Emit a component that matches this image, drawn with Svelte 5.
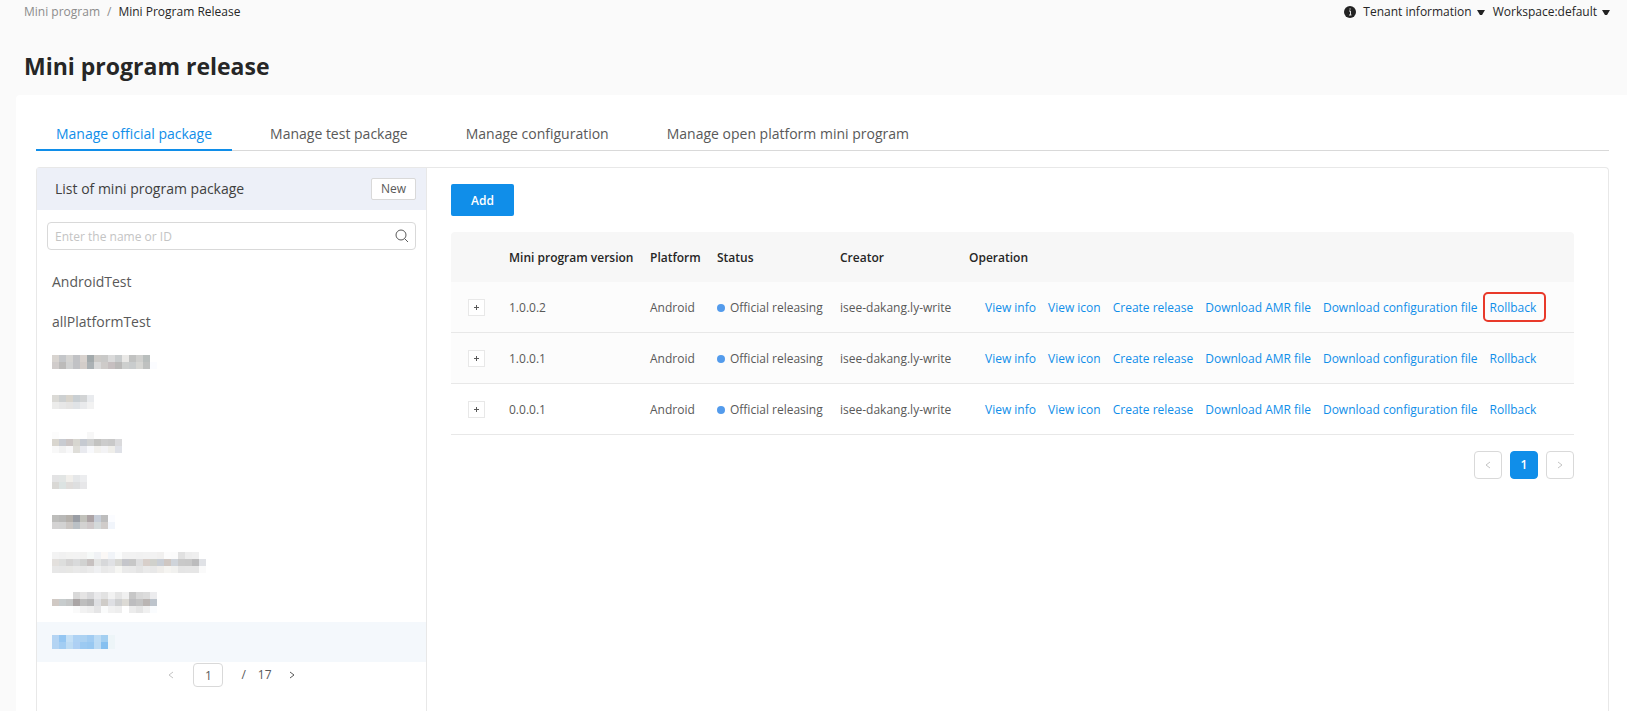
<script lang="ts">
	interface Release {
		version: string;
		platform: string;
		status: string;
		creator: string;
		flagged?: boolean;
	}

	const tabs = [
		'Manage official package',
		'Manage test package',
		'Manage configuration',
		'Manage open platform mini program'
	];

	const operations = [
		'View info',
		'View icon',
		'Create release',
		'Download AMR file',
		'Download configuration file',
		'Rollback'
	];

	const releases: Release[] = [
		{ version: '1.0.0.2', platform: 'Android', status: 'Official releasing', creator: 'isee-dakang.ly-write', flagged: true },
		{ version: '1.0.0.1', platform: 'Android', status: 'Official releasing', creator: 'isee-dakang.ly-write' },
		{ version: '0.0.0.1', platform: 'Android', status: 'Official releasing', creator: 'isee-dakang.ly-write' }
	];

	const packages = ['AndroidTest', 'allPlatformTest'];

	// masked package names, one string of cell colours per line of the mosaic
	const CELL = 7;
	const masked = [
		[
			'd8d4d0 c4c6c9 d5d4d2 c1c2c5 d8d2ce a2a9ab cccac7 c9c9c8 dadada c9cccd e9e8e6 c1c2c1 cfcfcd b9bebd',
			'd0cccb bcbbba d1d2d2 c1c2c5 d3cdc9 abb1b4 d9d9d9 cecbc9 c6bfc0 bab9b8 cdcfce c9cccd d6d6d3 bfc1c0 fbfcff'
		],
		['dbdad6 cdd0d1 d8d4cc c9cfd3 d2d4d5 e9ebee', 'ececeb e7e7e7 e5e4e3 e0e3e6 e9eaec f2f2f2'],
		[
			'fcfcfc ffffff ffffff ffffff ffffff f7f7f7',
			'd9d6cf c8cbd1 cbc5c4 d7d6d0 c6cad1 d0d1d1 c3c3c1 cccccc c9c9c9 dadadc',
			'f8f8f8 f1f1f1 f8f8f9 dfded9 e9eaef f8f9fc f2f1ee f3f3f5 efeeea dfe1e7'
		],
		['e3e3e4 e2e5e4 f1efeb e5e7e9 ecedef', 'd9d8d5 dce3e2 e0dddb dedfe0 e7e7e9'],
		[
			'bdbdbb b8b8b7 b4b0ab 999da4 c1c1bb aca3a5 c7cdd7 bdbdbd fbfcff',
			'd4d3d3 d2d2d2 cac6c3 bac0c5 d3d2d1 cfc9ca d4d9da d0ccca f1f5fb'
		],
		[
			'f3f3f3 f1f1f1 f3f3f2 f3f3f3 f2f2f1 f6f9f8 f0f2f5 fbf8f6 f1f4f8 fbfcfc f2f2f2 f2f2f2 f1f1f1 f2f2f2 f2f2f2 f1f0ef fcfcfc fbfbfb e1e1e1 ededed efefef',
			'e3e0dd dddedd d4d3d3 d9dadb d1d2d1 c7c1c0 e3e4e3 d7d8da e0e1e4 d8d8d4 c5c6cb c7c7c7 dededf d8cfca d0d1cc c9ced5 cfc7c2 cfd4da c9c9c9 c8c8c8 bcbcbd e0e2e6',
			'e7e7e7 e6e6e6 e7e7e5 e9e9e9 e7e7e7 ebebeb eff0f2 e9e9e9 ececec f6f6f3 eaeaea e9e9e9 e4e4e4 eaeaea e8e8e8 efedea f5f4f1 f1f1ef e5e5e5 e6e6e6 e6e6e6 fafafa'
		],
		[
			'ffffff ffffff ffffff d9d9d9 e5e4e4 d9d9db e9e9eb e2e2e2 f2f2f2 e5e5e5 f0f0f0 c7c7c7 d8d8d8 dcdcdc ececee',
			'd0c9c4 c7cccd c4c6c6 aaa5a5 bebebe b6b6b7 dedfe2 cfccc8 dedfe3 cfd0d1 dcdad5 bdbdbf c3c3c3 bab5b3 bdc4cc',
			'ffffff ffffff ffffff fafafa f2f2f2 eeeeee e5e5e6 fafbfb f1f1f1 eeeeee ffffff ececec e5e5e5 f0f0f0 fafcfe'
		],
		[
			'b4d4f3 94c6f2 c5e0f6 aed2f4 acd2f2 a1ccf2 bddcf5 a3cff1 edf5f8',
			'b3d4f3 a2cdf3 bedcf4 aed0f4 9ccaf2 98c8f1 bcdbf4 86c0f0 edf5f8'
		]
	].map((rows) => rows.map((row) => row.split(' ')));

	let activeTab = $state(0);
	let selectedMask = $state(masked.length - 1);
	let query = $state('');
	let listPage = $state('1');
</script>

{#snippet chevron(direction: 'left' | 'right')}
	<svg class="chevron" viewBox="0 0 8 8" width="8" height="8" aria-hidden="true">
		<path d={direction === 'left' ? 'M6 1 L2 4 L6 7' : 'M2 1 L6 4 L2 7'} />
	</svg>
{/snippet}

{#snippet caret()}
	<svg class="caret" viewBox="0 0 8 5" width="8" height="5" aria-hidden="true">
		<path d="M0 0 H8 L5 5 H3 Z" />
	</svg>
{/snippet}

<div class="page">
	<header class="topbar">
		<nav class="breadcrumb" aria-label="Breadcrumb">
			<a href="#mini-program">Mini program</a>
			<span class="separator">/</span>
			<span class="current">Mini Program Release</span>
		</nav>
		<div class="context">
			<button type="button" class="context-button">
				<svg class="info" viewBox="0 0 12 12" width="12" height="12" aria-hidden="true">
					<circle cx="6" cy="6" r="6" fill="#222" />
					<path d="M5 5 H6.5 V9 M5 9 H7.5 M5.4 3 H6.8" stroke="#ddd" fill="none" />
				</svg>
				Tenant information
				{@render caret()}
			</button>
			<button type="button" class="context-button">
				Workspace:default
				{@render caret()}
			</button>
		</div>
	</header>

	<h1>Mini program release</h1>

	<main class="panel">
		<div class="tabs" role="tablist">
			{#each tabs as tab, index}
				<button
					type="button"
					class="tab"
					class:active={index === activeTab}
					role="tab"
					aria-selected={index === activeTab}
					onclick={() => (activeTab = index)}
				>
					{tab}
				</button>
			{/each}
		</div>

		<div class="content">
			<aside class="sidebar">
				<div class="sidebar-header">
					<h2>List of mini program package</h2>
					<button type="button" class="new-button">New</button>
				</div>

				<div class="search">
					<input type="text" bind:value={query} placeholder="Enter the name or ID" aria-label="Enter the name or ID" />
					<button type="button" class="search-button" aria-label="Search">
						<svg viewBox="0 0 14 14" width="14" height="14" aria-hidden="true">
							<circle cx="6" cy="6" r="5" />
							<path d="M9.6 9.6 L13 13" />
						</svg>
					</button>
				</div>

				<ul class="packages">
					{#each packages as name}
						<li><button type="button" class="package">{name}</button></li>
					{/each}
					{#each masked as rows, index}
						<li>
							<button
								type="button"
								class="package"
								class:selected={index === selectedMask}
								aria-label="Hidden package {index + 1}"
								onclick={() => (selectedMask = index)}
							>
								<svg
									width={Math.max(...rows.map((row) => row.length)) * CELL}
									height={rows.length * CELL}
									shape-rendering="crispEdges"
									aria-hidden="true"
								>
									{#each rows as row, y}
										{#each row as color, x}
											<rect x={x * CELL} y={y * CELL} width={CELL} height={CELL} fill="#{color}" />
										{/each}
									{/each}
								</svg>
							</button>
						</li>
					{/each}
				</ul>

				<div class="simple-pager">
					<button type="button" class="arrow" disabled aria-label="Previous page">{@render chevron('left')}</button>
					<input type="text" bind:value={listPage} aria-label="Page" />
					<span class="slash">/</span>
					<span>17</span>
					<button type="button" class="arrow" aria-label="Next page">{@render chevron('right')}</button>
				</div>
			</aside>

			<section class="releases">
				<button type="button" class="add-button">Add</button>

				<table>
					<colgroup>
						<col class="col-expand" />
						<col class="col-version" />
						<col class="col-platform" />
						<col class="col-status" />
						<col class="col-creator" />
						<col />
					</colgroup>
					<thead>
						<tr>
							<th aria-label="Expand"></th>
							<th>Mini program version</th>
							<th>Platform</th>
							<th>Status</th>
							<th>Creator</th>
							<th>Operation</th>
						</tr>
					</thead>
					<tbody>
						{#each releases as release}
							<tr>
								<td class="expand-cell">
									<button type="button" class="expand" aria-label="Expand {release.version}">
										<svg viewBox="0 0 7 7" width="7" height="7" aria-hidden="true">
											<path d="M1 3.5 H6 M3.5 1 V6" />
										</svg>
									</button>
								</td>
								<td>{release.version}</td>
								<td>{release.platform}</td>
								<td><span class="status">{release.status}</span></td>
								<td>{release.creator}</td>
								<td>
									<div class="operations">
										{#each operations as operation}
											<a
												href="#{operation.toLowerCase().replaceAll(' ', '-')}"
												class:flagged={release.flagged && operation === 'Rollback'}
											>{operation}</a>
										{/each}
									</div>
								</td>
							</tr>
						{/each}
					</tbody>
				</table>

				<nav class="pagination" aria-label="Pagination">
					<button type="button" disabled aria-label="Previous">{@render chevron('left')}</button>
					<button type="button" class="current-page" aria-current="page">1</button>
					<button type="button" disabled aria-label="Next">{@render chevron('right')}</button>
				</nav>
			</section>
		</div>
	</main>
</div>

<style>
	:global(body) {
		background: #fafafa;
	}

	.page {
		--primary: #108ee9;
		--border: #d9d9d9;
		--border-light: #e8e8e8;
		--text: #595959;
		display: flex;
		flex-direction: column;
		box-sizing: border-box;
		height: 100vh;
		overflow: hidden;
		font-family: 'Segoe UI', 'Open Sans', 'Noto Sans', sans-serif;
		font-size: 12px;
		line-height: 18px;
		color: var(--text);
	}

	.page *,
	.page *::after {
		box-sizing: border-box;
	}

	button,
	input {
		margin: 0;
		padding: 0;
		font: inherit;
		color: inherit;
	}

	button {
		border: none;
		background: none;
		cursor: pointer;
	}

	button:disabled {
		cursor: not-allowed;
	}

	.topbar {
		display: flex;
		justify-content: space-between;
		padding: 3px 17px 0 24px;
	}

	.breadcrumb {
		display: flex;
		gap: 7px;
	}

	.breadcrumb a,
	.separator {
		color: #8c8c8c;
		text-decoration: none;
	}

	.current,
	.context-button {
		color: #262626;
	}

	.context {
		display: flex;
		gap: 8px;
	}

	.context-button {
		display: flex;
		align-items: center;
		gap: 5px;
	}

	.info {
		margin-right: 2px;
	}

	.caret {
		fill: #222;
	}

	h1 {
		margin: 28px 24px 12px;
		font-size: 23px;
		line-height: 34px;
		font-weight: 700;
		color: #262626;
	}

	.panel {
		flex: 1;
		display: flex;
		flex-direction: column;
		min-height: 0;
		margin-left: 16px;
		padding: 20px 18px 0 20px;
		background: #fff;
		border-top-left-radius: 4px;
	}

	.tabs {
		display: flex;
		gap: 18px;
		margin-bottom: 16px;
		box-shadow: inset 0 -1px 0 var(--border);
	}

	.tab {
		padding: 9px 20px 5px;
		border-bottom: 2px solid transparent;
		font-size: 14px;
		line-height: 20px;
	}

	.tab.active {
		border-bottom-color: var(--primary);
		color: var(--primary);
	}

	.content {
		flex: 1;
		display: flex;
		min-height: 0;
		border: 1px solid var(--border-light);
		border-bottom: none;
		border-radius: 4px 4px 0 0;
	}

	.sidebar {
		flex: none;
		width: 390px;
		border-right: 1px solid var(--border-light);
	}

	.sidebar-header {
		display: flex;
		align-items: center;
		justify-content: space-between;
		padding: 10px 10px 10px 18px;
		background: #edf0f8;
	}

	h2 {
		margin: 0;
		font-size: 14px;
		line-height: 20px;
		font-weight: 400;
		color: #404040;
	}

	.new-button {
		padding: 0 9px;
		border: 1px solid var(--border);
		border-radius: 2px;
		background: #fff;
		line-height: 20px;
	}

	.search {
		display: flex;
		align-items: center;
		margin: 12px 10px;
		padding: 0 6px 0 7px;
		border: 1px solid var(--border);
		border-radius: 4px;
	}

	.search input {
		flex: 1;
		height: 26px;
		border: none;
		outline: none;
		background: none;
	}

	.search input::placeholder {
		color: #c4c4c4;
	}

	.search-button {
		display: flex;
	}

	.search-button svg {
		fill: none;
		stroke: #595959;
	}

	.packages {
		margin: 0;
		padding: 0;
		list-style: none;
	}

	.package {
		display: flex;
		align-items: center;
		width: 100%;
		height: 40px;
		padding: 0 15px;
		font-size: 14px;
	}

	.package.selected {
		background: #f4f8fc;
	}

	.simple-pager {
		display: flex;
		align-items: center;
		justify-content: center;
		gap: 16px;
		margin-top: 1px;
	}

	.simple-pager input {
		width: 30px;
		height: 24px;
		margin: 0 2px;
		border: 1px solid var(--border);
		border-radius: 4px;
		text-align: center;
	}

	.slash {
		margin-right: -4px;
	}

	.arrow {
		display: flex;
	}

	.chevron {
		fill: none;
		stroke: #595959;
	}

	button:disabled .chevron {
		stroke: #c4c4c4;
	}

	.releases {
		flex: 1;
		min-width: 0;
		padding: 16px 34px 0 24px;
	}

	.add-button {
		display: block;
		padding: 8px 20px 6px;
		border-radius: 2px;
		background: var(--primary);
		font-weight: 600;
		color: #fff;
	}

	table {
		width: 100%;
		margin: 16px 0;
		border-spacing: 0;
		table-layout: fixed;
		white-space: nowrap;
	}

	.col-expand {
		width: 50px;
	}

	.col-version {
		width: 141px;
	}

	.col-platform {
		width: 67px;
	}

	.col-status {
		width: 123px;
	}

	.col-creator {
		width: 129px;
	}

	th,
	td {
		height: 50px;
		padding: 2px 8px 0;
		text-align: left;
	}

	th {
		background: #f7f7f7;
		font-weight: 600;
		color: #262626;
	}

	th:first-child {
		border-top-left-radius: 4px;
	}

	th:last-child {
		border-top-right-radius: 4px;
	}

	td {
		height: 51px;
		border-bottom: 1px solid var(--border-light);
		background: #fcfcfc;
	}

	tr:last-child td {
		background: #fff;
	}

	.expand-cell {
		padding: 0 0 0 17px;
	}

	.expand {
		display: flex;
		align-items: center;
		justify-content: center;
		width: 17px;
		height: 17px;
		border: 1px solid var(--border-light);
		background: #fff;
	}

	.expand svg {
		fill: none;
		stroke: #595959;
	}

	.status {
		display: flex;
		align-items: center;
		gap: 5px;
	}

	.status::before {
		content: '';
		width: 8px;
		height: 8px;
		border-radius: 50%;
		background: #539bec;
	}

	.operations {
		display: flex;
		gap: 12px;
		padding-left: 16px;
	}

	.operations a {
		position: relative;
		color: var(--primary);
		text-decoration: none;
	}

	.flagged::after {
		content: '';
		position: absolute;
		inset: -7px -10px -5px -7px;
		border: 2px solid #e8392a;
		border-radius: 5px;
		pointer-events: none;
	}

	.pagination {
		display: flex;
		justify-content: flex-end;
		gap: 8px;
	}

	.pagination button {
		display: flex;
		align-items: center;
		justify-content: center;
		width: 28px;
		height: 28px;
		border: 1px solid var(--border);
		border-radius: 4px;
	}

	.pagination .current-page {
		border-color: var(--primary);
		background: var(--primary);
		font-weight: 600;
		color: #fff;
	}
</style>
